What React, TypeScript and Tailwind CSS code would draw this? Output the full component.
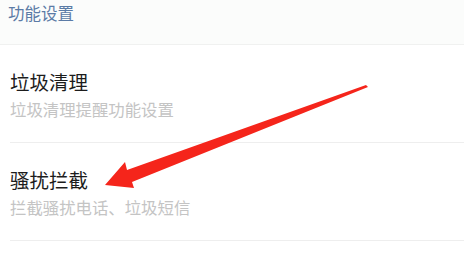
import React from 'react';

const items = [
  { title: '垃圾清理', desc: '垃圾清理提醒功能设置' },
  { title: '骚扰拦截', desc: '拦截骚扰电话、垃圾短信' },
];

export default function App() {
  return (
    <div
      className="relative w-[464px] h-[268px] overflow-hidden bg-white"
      style={{ fontFamily: '"Noto Sans CJK SC", "Noto Sans", sans-serif' }}
    >
      {/* Section header */}
      <div className="h-[45px] bg-[#fbfcfb] border-b border-[#f0f1f0] pl-[8px] pt-[1px]">
        <span className="text-[16.5px] leading-[22px] text-[#5b7ba6]">功能设置</span>
      </div>

      {/* Rows */}
      <div className="flex flex-col">
        {items.map((it) => (
          <div key={it.title} className="ml-[10px] border-b border-[#eeeeee] pt-[24px] pb-[22px] flex flex-col gap-[3px]">
            <span className="text-[19.5px] leading-[26px] text-[#1c1c1c]">{it.title}</span>
            <span className="text-[16.4px] leading-[22px] text-[#c4c4c4]">{it.desc}</span>
          </div>
        ))}
      </div>

      {/* Red annotation arrow */}
      <svg className="absolute left-0 top-0 pointer-events-none" width="464" height="268" viewBox="0 0 464 268">
        <polygon
          points="105,185 125,162 127,170 366,85 368,87 132,182 134,188"
          fill="#f5251b"
        />
      </svg>
    </div>
  );
}
